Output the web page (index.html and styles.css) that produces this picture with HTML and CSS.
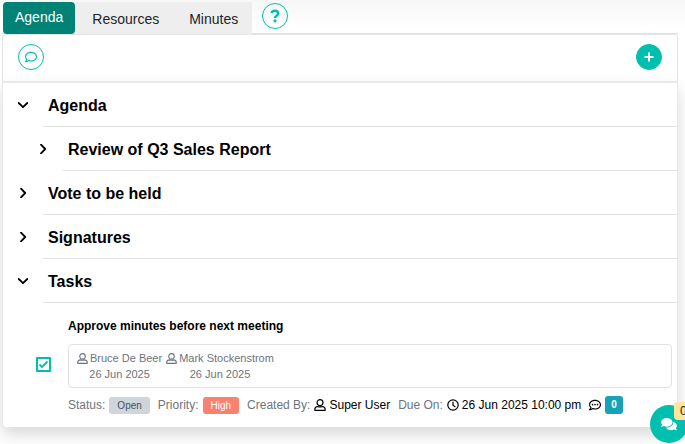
FILE: index.html
```
<!DOCTYPE html>
<html lang="en">
<head>
<meta charset="utf-8">
<meta name="viewport" content="width=device-width, initial-scale=1">
<title>Meeting agenda</title>
<link rel="stylesheet" href="styles.css">
</head>
<body>
<svg class="sprite" aria-hidden="true">
  <symbol id="down" viewBox="0 0 10 10"><path d="M.7 3 5 7.2 9.3 3" fill="none" stroke="currentColor" stroke-width="1.8" stroke-linecap="round" stroke-linejoin="round"/></symbol>
  <symbol id="right" viewBox="0 0 10 10"><path d="M3 .7 7.2 5 3 9.3" fill="none" stroke="currentColor" stroke-width="1.8" stroke-linecap="round" stroke-linejoin="round"/></symbol>
  <symbol id="user" viewBox="0 0 12 12"><g fill="none" stroke="currentColor" stroke-width="1.2"><circle cx="6" cy="3.700" r="3"/><path d="M3.800 7.500C1.800 7.700.8 8.800.8 10.200v1.100h10.400v-1.100c0-1.400-1-2.500-3-2.700-1.400.6-3 .6-4.400 0z" stroke-linejoin="round"/></g></symbol>
  <symbol id="clock" viewBox="0 0 12 12"><g fill="none" stroke="currentColor" stroke-width="1.200"><circle cx="6" cy="6" r="5.200"/><path d="M6 3v3.200l2 1.500" stroke-linecap="round"/></g></symbol>
  <symbol id="comment" viewBox="0 0 512 512"><path fill="currentColor" d="M256 32C114.600 32 0 125.100 0 240c0 47.600 19.900 91.200 52.900 126.300C38 405.700 7 439.100 6.500 439.500c-6.600 7-8.400 17.200-4.600 26S14.400 480 24 480c61.500 0 110-25.700 139.100-46.300C192 442.800 223.200 448 256 448c141.400 0 256-93.100 256-208S397.400 32 256 32zm0 368c-26.700 0-53.100-4.100-78.400-12.100l-22.700-7.200-19.500 13.800c-14.300 10.100-33.900 21.400-57.500 29 7.300-12.100 14.400-25.700 19.900-40.200l10.600-28.100-20.600-21.800C69.700 314.100 48 282.200 48 240c0-88.200 93.300-160 208-160s208 71.800 208 160-93.300 160-208 160z"/></symbol>
  <symbol id="comments" viewBox="0 0 576 512"><path fill="currentColor" d="M416 192c0-88.400-93.100-160-208-160S0 103.600 0 192c0 34.300 14.100 65.900 38 92-13.400 30.200-35.500 54.200-35.800 54.500-2.200 2.300-2.800 5.700-1.500 8.700S4.800 352 8 352c36.600 0 66.900-12.300 88.700-25 32.200 15.700 70.300 25 111.300 25 114.900 0 208-71.600 208-160zm122 220c23.900-26 38-57.700 38-92 0-66.900-53.500-124.200-129.300-148.100.9 6.600 1.300 13.300 1.300 20.100 0 105.900-107.700 192-240 192-10.800 0-21.300-.8-31.700-1.900C207.800 439.600 281.800 480 368 480c41 0 79.100-9.200 111.300-25 21.800 12.700 52.100 25 88.700 25 3.200 0 6.100-1.900 7.300-4.800 1.300-2.900.7-6.300-1.500-8.700-.3-.3-22.400-24.200-35.800-54.500z"/></symbol>
</svg>

<main class="page">
  <nav class="tabs" aria-label="Meeting sections">
    <a class="tab active" href="#agenda" aria-current="page">Agenda</a>
    <div class="tab-group">
      <a class="tab" href="#resources">Resources</a>
      <a class="tab" href="#minutes">Minutes</a>
    </div>
    <button class="round help" type="button" aria-label="Help">
      <svg width="10" height="14" viewBox="0 0 10 14" aria-hidden="true"><path d="M1.500 4C2 2.400 3.200 1.700 4.900 1.700c2 0 3.300 1.100 3.300 2.700 0 2.500-3.200 2.300-3.200 4.600" fill="none" stroke="currentColor" stroke-width="2.400"/><circle cx="5" cy="11.800" r="1.600" fill="currentColor"/></svg>
    </button>
  </nav>

  <div class="toolbar">
    <button class="round" type="button" aria-label="Comment"><svg class="i12" aria-hidden="true"><use href="#comment"/></svg></button>
    <button class="round solid" type="button" aria-label="Add item">
      <svg width="10" height="10" viewBox="0 0 10 10" aria-hidden="true"><path d="M5 .5v9M.5 5h9" stroke="currentColor" stroke-width="2"/></svg>
    </button>
  </div>

  <section class="card" id="agenda">
    <div class="row"><button class="toggle" type="button" aria-label="Collapse Agenda" aria-expanded="true"><svg class="chevron"><use href="#down"/></svg></button><h2>Agenda</h2></div>
    <div class="row child"><button class="toggle" type="button" aria-label="Expand Review of Q3 Sales Report" aria-expanded="false"><svg class="chevron"><use href="#right"/></svg></button><h2>Review of Q3 Sales Report</h2></div>
    <div class="row"><button class="toggle" type="button" aria-label="Expand Vote to be held" aria-expanded="false"><svg class="chevron"><use href="#right"/></svg></button><h2>Vote to be held</h2></div>
    <div class="row"><button class="toggle" type="button" aria-label="Expand Signatures" aria-expanded="false"><svg class="chevron"><use href="#right"/></svg></button><h2>Signatures</h2></div>
    <div class="row"><button class="toggle" type="button" aria-label="Collapse Tasks" aria-expanded="true"><svg class="chevron"><use href="#down"/></svg></button><h2>Tasks</h2></div>

    <div class="task">
      <input class="check" type="checkbox" id="task-1" checked>
      <div class="task-body">
        <label class="title" for="task-1">Approve minutes before next meeting</label>
        <ul class="people">
          <li><span class="name"><svg class="i11" aria-hidden="true"><use href="#user"/></svg>Bruce De Beer</span><span>26 Jun 2025</span></li>
          <li><span class="name"><svg class="i11" aria-hidden="true"><use href="#user"/></svg>Mark Stockenstrom</span><span>26 Jun 2025</span></li>
        </ul>
        <div class="meta">
          <span class="pair">Status: <span class="badge open">Open</span></span>
          <span class="pair">Priority: <span class="badge high">High</span></span>
          <span class="pair">Created By: <span class="value"><svg class="i12" aria-hidden="true"><use href="#user"/></svg>Super User</span></span>
          <span class="pair">Due On: <span class="value"><svg class="i12" aria-hidden="true"><use href="#clock"/></svg>26 Jun 2025 10:00 pm</span></span>
          <span class="pair value"><svg class="i12" viewBox="0 0 512 512" aria-hidden="true"><use href="#comment"/><g fill="currentColor"><circle cx="150" cy="240" r="34"/><circle cx="256" cy="240" r="34"/><circle cx="362" cy="240" r="34"/></g></svg><span class="badge count">0</span></span>
        </div>
      </div>
    </div>
  </section>
</main>

<button class="chat" type="button" aria-label="Open chat"><svg class="chat-icon" aria-hidden="true"><use href="#comments"/></svg><span class="chat-count">0</span></button>
</body>
</html>
```

FILE: styles.css
```
* { box-sizing: border-box; }

html { overflow: hidden; }

body {
  margin: 0;
  min-height: 100vh;
  background: linear-gradient(#f7f7f7, #fff 28px);
  color: #000;
  font-family: "Liberation Sans", Arial, sans-serif;
  font-size: 12px;
  line-height: 16px;
}

button {
  padding: 0;
  border: 0;
  background: none;
  color: inherit;
  font: inherit;
}

h2, ul { margin: 0; padding: 0; }

.sprite { position: absolute; width: 0; height: 0; }

.page { padding: 2px 7px 16px 2px; }

.tabs {
  display: flex;
  align-items: stretch;
  height: 32px;
  padding-left: 1px;
  box-shadow: inset 0 -1px #dee2e6;
}

.tab {
  display: flex;
  align-items: center;
  padding-top: 2px;
  color: #212529;
  font-size: 14px;
  text-decoration: none;
}

.tab.active {
  padding: 0 12px 2px;
  border-radius: 4px;
  background: #008375;
  color: #fff;
}

.tab-group {
  display: flex;
  gap: 30px;
  padding: 0 14px 0 17px;
  background: #eee;
}

.round {
  display: flex;
  align-items: center;
  justify-content: center;
  width: 26px;
  height: 26px;
  border: 1px solid #00bfae;
  border-radius: 50%;
  color: #00bfae;
}

.round.solid { background: #00bfae; color: #fff; }

.help { align-self: flex-start; margin: 1px 0 0 10px; }

.toolbar {
  display: flex;
  align-items: center;
  justify-content: space-between;
  height: 47px;
  padding: 0 15px 2px;
  border: 1px solid #e3e6e9;
  border-bottom: 0;
  border-radius: 4px 4px 0 0;
  background: #fff;
}

.card {
  padding-bottom: 13px;
  border: 1px solid #e6e8ea;
  border-width: 2px 1px 0;
  border-radius: 0 0 4px 4px;
  background: #fff;
  box-shadow: 0 8px 16px rgba(0, 0, 0, .15);
}

.row {
  display: flex;
  height: 44px;
  padding-left: 15px;
}

.row.child { padding-left: 35px; }

.toggle { display: flex; align-items: center; width: 25px; }

.chevron { width: 10px; height: 10px; }

h2 {
  flex: 1;
  padding: 13px 5px 0;
  border-bottom: 1px solid #e3e3e3;
  font-size: 16px;
  line-height: 20px;
}

.task {
  display: flex;
  align-items: center;
  gap: 17px;
  padding: 15px 5px 0 33px;
}

.check {
  flex: none;
  width: 15px;
  height: 15px;
  margin: 0 0 4px;
  border: 2px solid #00bfae;
  border-radius: 1px;
  appearance: none;
}

.check:checked {
  background: url("data:image/svg+xml,%3Csvg xmlns='http://www.w3.org/2000/svg' viewBox='0 0 11 11'%3E%3Cpath d='M1.500 5.500 4 8l5.500-5.500' fill='none' stroke='%2300bfae' stroke-width='1.800'/%3E%3C/svg%3E") center / 11px 11px no-repeat;
}

.task-body { flex: 1; min-width: 0; }

.title { display: block; font-weight: bold; }

.people {
  display: flex;
  gap: 4px;
  margin-top: 10px;
  padding: 5px 8px;
  border: 1px solid #dee2e6;
  border-radius: 4px;
  color: #6c757d;
  font-size: 11px;
  list-style: none;
}

.people li { display: flex; flex-direction: column; align-items: center; }

.name, .value { display: flex; align-items: center; gap: 3px; }

.name { gap: 2px; }

.i11 { width: 11px; height: 11px; }

.i12 { width: 12px; height: 12px; }

.meta {
  display: flex;
  align-items: center;
  gap: 8px;
  margin-top: 8px;
  color: #6c757d;
  white-space: nowrap;
}

.pair { display: flex; align-items: center; gap: 4px; }

.value { color: #000; }

.badge {
  padding: 1px 8px 0;
  border-radius: 3px;
  font-size: 10px;
}

.open { background: #ced6db; color: #495057; }

.high { background: #fa8072; color: #fff; }

.count {
  padding: 1px 6px;
  background: #17a2b8;
  color: #fff;
  font-weight: bold;
}

.chat {
  position: fixed;
  right: -3px;
  bottom: 1px;
  display: flex;
  align-items: center;
  justify-content: center;
  width: 38px;
  height: 38px;
  border-radius: 50%;
  background: #00bfae;
  color: #fff;
}

.chat-icon { width: 16px; height: 14px; }

.chat-count {
  position: absolute;
  top: -3px;
  left: 24px;
  padding: 1px 6px;
  border-radius: 4px;
  background: #ffe69c;
  color: #212529;
}
```
